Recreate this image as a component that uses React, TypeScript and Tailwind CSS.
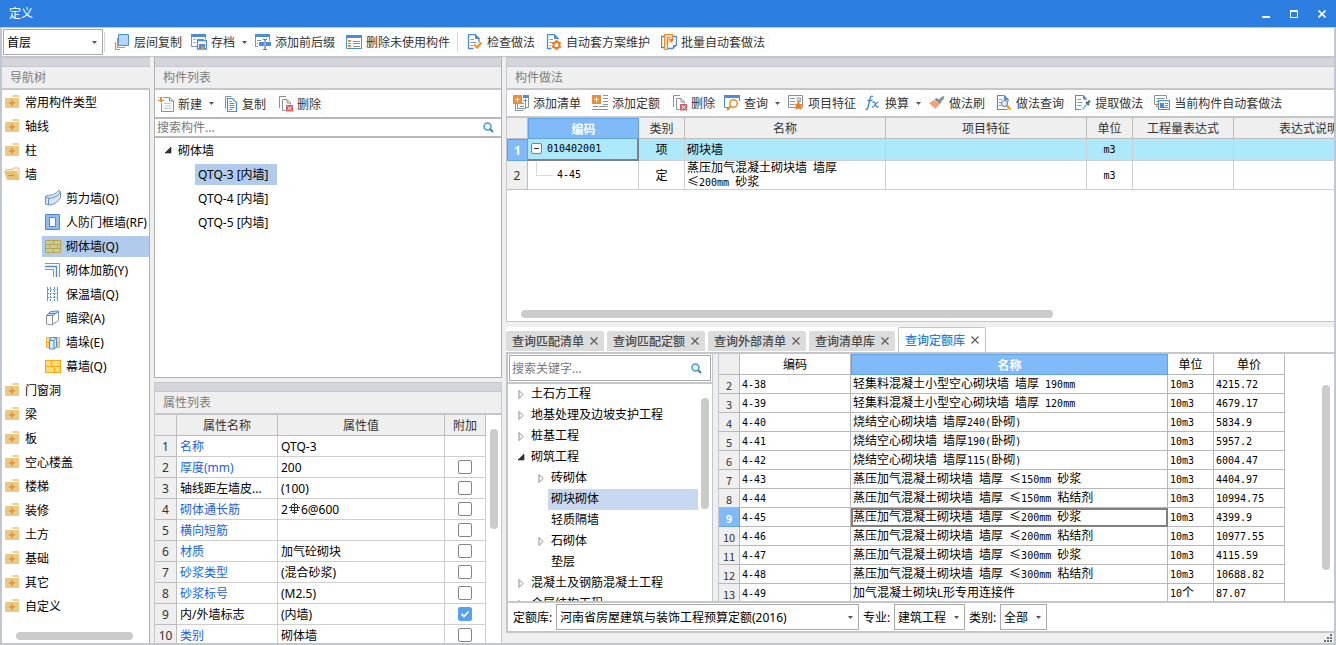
import React from 'react';
import clsx from 'clsx';

const BLUE = '#4a8ddb';
const ORANGE = '#f08a2c';
const GRAY = '#87939b';

/* ---------- 图标 ---------- */

const icons = {
    layerCopy: (
        <>
            <path d="M4.500 .5h10v11h-10z" fill="#b5d5fa" stroke={BLUE} />
            <path d="M3.500 4v9.500H11M1.500 8v7.500H6" fill="none" stroke={ORANGE} strokeWidth="1.2" />
        </>
    ),
    archive: (
        <>
            <path d="M0 0h15v3H0z" fill={BLUE} />
            <path d="M.5 3v9.500H6M2.500 5.500h2M2.500 8.500h2M6 5.500h7M14.500 3v2" fill="none" stroke={GRAY} />
            <path d="M6.500 6.500h9v8.500h-9z" fill="#fff" stroke={BLUE} strokeWidth="1.3" />
            <path d="M8 10h6v5H8z" fill={BLUE} />
            <path d="M10 12h3v3h-3z" fill={ORANGE} />
        </>
    ),
    prefix: (
        <>
            <path d="M0 0h15v3H0z" fill={BLUE} />
            <path d="M.5 3v10M14.500 3v4M.5 12.500H3M2 6.500h4M2 9.500h1" fill="none" stroke={GRAY} />
            <path d="M4 8h5v4H4zM11 8h5v4h-5z" fill={BLUE} />
            <path d="M8 5.500h4M10 5.500v10M8 15.500h4" stroke="#3d7fca" fill="none" strokeWidth="1.2" />
        </>
    ),
    removeUnused: (
        <>
            <path d="M0 1h16v4H0z" fill={BLUE} />
            <path d="M.5 4v10.500h15V4" fill="#fff" stroke={BLUE} />
            <path d="M2 6h3v2H2zM2 9h3v1H2zM2 11h3v2H2z" fill={ORANGE} />
            <path d="M7 7.500h7M7 9.500h7M7 12.500h7" stroke={GRAY} />
        </>
    ),
    check: (
        <>
            <path d="M8 .5H1.500v14h5M8 .5l4 4v4" fill="none" stroke={BLUE} strokeWidth="1.3" />
            <path d="M8 0v5h5z" fill={BLUE} />
            <path d="M3.500 5.500H7M3.500 8.500h6M3.500 11.500H6" stroke={GRAY} />
            <path d="M7 10.500l3 3 4.500-5" fill="none" stroke={ORANGE} strokeWidth="2" />
        </>
    ),
    autoPlan: (
        <>
            <path d="M8 .5H1.500v14h4M8 .5l4 4v1" fill="none" stroke={BLUE} strokeWidth="1.3" />
            <path d="M8 0v5h5z" fill={BLUE} />
            <path d="M3.500 5.500H7M3.500 8.500h3M3.500 11.500H5" stroke={GRAY} />
            <circle cx="10.500" cy="11" r="3" fill="#fff" stroke="#ee7b22" strokeWidth="2" />
            <path d="M10.500 6v2M10.500 14v2M6.200 8.500l1.500 1M13.300 12.500l1.500 1M6.200 13.500l1.500-1M13.300 9.500l1.500-1" stroke="#ee7b22" strokeWidth="2" />
        </>
    ),
    batch: (
        <>
            <path d="M3.500 2.500h-3v11h3" fill="none" stroke={BLUE} strokeWidth="1.300" />
            <path d="M8 2.500h7.500v8l-4 4H6" fill="#fff" stroke={BLUE} strokeWidth="1.300" />
            <path d="M12 15v-4h4z" fill={BLUE} />
            <path d="M3.500 15.500V.5h8v5M3.500 15.500h3V3.500h3" fill="#fbdcb8" stroke={ORANGE} strokeWidth="1.200" />
            <path d="M7.500 5h6l-3 4z" fill={ORANGE} />
        </>
    ),
    create: (
        <>
            <path d="M6 1.500h5.500l4 3.500v10.500h-12V7" fill="#fff" stroke={GRAY} />
            <path d="M11.500 1.500V5h4" fill="none" stroke={GRAY} />
            <path d="M6 7.500h7M6 10h7M6 12.500h7" stroke="#c3cacf" />
            <path d="M2 1h2v2H2zM5 1h2v1H5zM0 1h1v1H0zM0 5h2V4H0zM4 4h2v1H4zM2 3h2v3H2z" fill={ORANGE} />
        </>
    ),
    copy: (
        <>
            <path d="M3.500 12.500v-12h6" fill="none" stroke={GRAY} />
            <path d="M5.500 2.500h5l4 4v9h-9z" fill="#fff" stroke={BLUE} strokeWidth="1.200" />
            <path d="M7.500 7.500h5M7.500 9.500h5M7.500 11.500h5M7.500 13.500h3M7.500 5.500h2" stroke={BLUE} />
        </>
    ),
    remove: (
        <>
            <path d="M2.500 12V.5H9" fill="none" stroke={GRAY} />
            <path d="M8.500 14.500h-3v-11H10l3.500 3.500v1.500" fill="none" stroke={GRAY} />
            <path d="M10 3.500v3.500h3.500" fill="none" stroke={GRAY} />
            <path d="M9 9h7v6.500H9z" fill="#d95b5b" />
            <path d="M10.500 10.500l4 3.500M14.500 10.500l-4 3.500" stroke="#fff" />
        </>
    ),
    addList: (
        <>
            <path d="M10 0h6v3h-6z" fill={BLUE} />
            <path d="M15.500 3v9.500h-3M4.500 9v4.500h8v-10M2.500 9v6.500h8" fill="none" stroke={GRAY} />
            <path d="M10 5.500h4M7 8.500h4M7 11.500h4" stroke={GRAY} />
            <path d="M0 0h9v9H0z" fill="#ea8d3c" />
            <path d="M4.500 2v5M2 4.500h5" stroke="#fff" />
        </>
    ),
    addQuota: (
        <>
            <path d="M11 .5h5M11 3.500h5M11 6.500h5M11 9.500h5M7 11.500h9M1 11.500h5M0 14.500h16" stroke={GRAY} />
            <path d="M0 0h9v9H0z" fill="#ea8d3c" />
            <path d="M4.500 2v5M2 4.500h5" stroke="#fff" />
        </>
    ),
    query: (
        <>
            <path d="M.5 2v10.500H4M15.500 2v4" fill="none" stroke={BLUE} />
            <path d="M0 0h16v3H0z" fill={BLUE} />
            <circle cx="9.500" cy="8.500" r="3.700" fill="#fff" stroke={ORANGE} strokeWidth="1.500" />
            <path d="M6.500 11.500l-3.500 3.500" stroke={ORANGE} strokeWidth="2.400" />
        </>
    ),
    feature: (
        <>
            <path d="M.5 .5h14v12H.5z" fill="#fff" stroke={GRAY} />
            <path d="M2 3.500h5M2 6.500h5M2 9.500h4M8.500 3h4v2h-4M9 6.500h4" fill="none" stroke={GRAY} />
            <path d="M10.500 6l1.400 3 3.300.4-2.500 2.200.8 3.400-3-1.700-3 1.700.8-3.400L5.800 9.400l3.300-.4z" fill="#ee7b22" />
        </>
    ),
    formula: (
        <>
            <path d="M8 1.500C6.500.6 5.600 1.300 5.200 3L3 12.500c-.4 1.800-1.200 2.300-2.500 1.800M2.500 5.500h5" fill="none" stroke="#3f82d2" strokeWidth="1.300" />
            <path d="M7.500 7.500c2-1.500 2.500 0 3 2s1.300 3.300 3 2M13.500 7.200c-2.500-.2-4 5.300-6.500 5" fill="none" stroke="#3f82d2" strokeWidth="1.200" />
        </>
    ),
    brush: (
        <>
            <path d="M0 8l5-3 6 4-4.500 5z" fill="#fb9e72" />
            <path d="M5.500 4.500l2-1.500 5 4-1.500 2z" fill="#6f8794" />
            <path d="M9 5l3-2.500L14 1l1.500 1-1 2.500-3.500 3z" fill="#87939b" />
        </>
    ),
    methodQuery: (
        <>
            <path d="M8 .5H1.500v14h10M8 .5l4 4v2" fill="none" stroke={BLUE} strokeWidth="1.200" />
            <path d="M8 0v5h5z" fill={BLUE} />
            <path d="M3 4.500h3M3 7.500h2M3 10.500h2" stroke={GRAY} />
            <circle cx="8.500" cy="8.500" r="3" fill="#e4eefc" stroke="#7287b8" strokeWidth="1.200" />
            <path d="M11 11l3.500 3.500" stroke="#f2a12d" strokeWidth="2.600" />
        </>
    ),
    extract: (
        <>
            <path d="M8 .5H.5v14H6M8 .5l3.500 4" fill="none" stroke={BLUE} strokeWidth="1.200" />
            <path d="M8 0v4.500h4z" fill={BLUE} />
            <path d="M2.500 4.500H6M2.500 7.500h5M2.500 10.500h4" stroke={GRAY} />
            <path d="M7.500 14.500l5-6" stroke="#8fd0e0" strokeWidth="2" />
            <path d="M11 7l3 3M12.500 8.500L15 5.500" stroke="#5e6b72" strokeWidth="2" />
        </>
    ),
    currentAuto: (
        <>
            <path d="M4 9.500H.5v-9h12V4M2.500 3.500h8M2.500 6.500H4" fill="none" stroke={GRAY} />
            <path d="M4.500 5.500h11v9h-11z" fill="#fff" stroke={BLUE} strokeWidth="1.200" />
            <path d="M6 8h4v4H6z" fill={BLUE} />
            <path d="M11 8.500h3M11 10.500h3M6 12.500h8" stroke={BLUE} />
            <path d="M2.500 9v3H4" stroke={ORANGE} fill="none" />
        </>
    ),
    folder: (
        <>
            <path d="M8 3l1-2h5l1 1v1z" fill="#efcc8d" />
            <path d="M1 4h14v10H1z" fill="#eec782" />
            <path d="M8 6v6M5 9h6" stroke="#cc9b45" strokeWidth="1.600" />
        </>
    ),
    folderOpen: (
        <>
            <path d="M2 5V3.500h6l1-1.500h6v11" fill="#fbf0d8" stroke="#e3bd77" />
            <path d="M0 5h13l2.500 9H3z" fill="#ecc277" />
            <path d="M4.500 9.500h6" stroke="#c8953c" strokeWidth="1.400" />
        </>
    ),
    shearWall: (
        <>
            <path d="M.5 7l1-1.500c6 0 9.500-2 12-5l2 1v6c-2.500 4.500-7 7.500-12 7.500l-3-1z" fill="#d5e6fb" stroke="#6d8fb5" />
            <path d="M.5 7l3 1.200c5.500 0 9.500-2.200 12-6.200M3.500 8.200V15" fill="none" stroke="#5b8fce" />
        </>
    ),
    doorFrame: (
        <>
            <path d="M.5 .5h14v15H.5z" fill="#8fbcf4" stroke="#4f88cd" />
            <path d="M4.500 3.500h6v9h-6z" fill="#fff" stroke="#4f88cd" />
        </>
    ),
    brick: (
        <>
            <path d="M.5 2.500h15v12H.5z" fill="#c5cba9" stroke="#baa545" />
            <path d="M.5 6.500h15M.5 10.500h15M8.500 2.500v4M4.500 6.500v4M12.500 6.500v4M8.500 10.500v4" fill="none" stroke="#baa545" />
        </>
    ),
    brickBar: (
        <>
            <path d="M0 1.500h14.500V15M0 7.500h8.500V15" fill="none" stroke={GRAY} />
            <path d="M0 4.500h11.500V15" fill="none" stroke={BLUE} strokeWidth="1.400" />
        </>
    ),
    insulation: (
        <>
            <path d="M2.500 1v14M12.500 1v14" stroke="#5b9be2" />
            <path d="M5.500 1v14M9.500 1v14" stroke={BLUE} strokeDasharray="2 1" />
            <path d="M3 3.500h9M3 7.500h9M3 11.500h9" stroke={BLUE} strokeDasharray="1 1.500" />
        </>
    ),
    beam: (
        <>
            <path d="M1.500 5.500h6v9.500l-6-1zM7.500 5.500l6-4v9l-6 4" fill="#fff" stroke={GRAY} />
            <path d="M1.500 5.500l4-4 8-.5-5.500 4.500z" fill="#c3dcf8" stroke={BLUE} />
            <path d="M3.500 3.500h7" stroke={BLUE} />
        </>
    ),
    pier: (
        <>
            <path d="M1.500 3.500h13v10h-13z" fill="#fde08c" stroke="#f5b324" />
            <path d="M1.500 8.500h13M4.500 3.500v5M12.500 8.500v5" stroke="#f5b324" />
            <path d="M4.500 6.500l2-3h5v9l-2 2.500h-5z" fill="#dbeafb" stroke={BLUE} />
            <path d="M4.500 6.500h4.500v8.500M9 6.500l2.500-3" fill="none" stroke={BLUE} />
        </>
    ),
    curtain: (
        <>
            <path d="M.5 2.500h15v12H.5z" fill="#fedb82" stroke="#f5ab12" strokeWidth="1.200" />
            <path d="M.5 8.500h15M6.500 2.500v6M9.500 8.500v6" stroke="#f5ab12" strokeWidth="1.200" />
        </>
    ),
};

type IconName = keyof typeof icons;

const Icon: React.FC<{ name: IconName }> = ({ name }) => (
    <svg viewBox="0 0 16 16" className="h-4 w-4 shrink-0" aria-hidden="true">
        {icons[name]}
    </svg>
);

const Caret = ({ className }: { className?: string }) => (
    <svg viewBox="0 0 5 3" className={clsx('h-[3px] w-[5px] shrink-0', className)} aria-hidden="true">
        <path d="M0 0h5L2.500 3z" fill="#555" />
    </svg>
);

const SearchIcon = () => (
    <svg viewBox="0 0 11 11" className="h-[11px] w-[11px] shrink-0" aria-hidden="true">
        <circle cx="4.500" cy="4.500" r="3.500" fill="#eef6fc" stroke="#4a9fd0" strokeWidth="1.500" />
        <path d="M7 7l3 3" stroke="#2f86bd" strokeWidth="2" />
    </svg>
);

const Expander = ({ open }: { open: boolean }) => (
    <svg viewBox="0 0 8 10" className="h-[10px] w-2 shrink-0" aria-hidden="true">
        {open ? <path d="M7 2v6H1z" fill="#333" stroke="#222" strokeWidth=".6" /> : <path d="M2 1.500l4 4-4 4z" fill="#fff" stroke="#8a8a8a" />}
    </svg>
);

const RebarMark = () => (
    <svg viewBox="0 0 11 11" className="mx-px mb-1 inline-block h-[11px] w-[11px]" role="img" aria-label="HRB400">
        <path d="M5.500 0v11M3 1.500h5M0 4.500h11M1 7.500h9M3 9.500h5M2.500 2v6M8.500 2v6" stroke="#333" fill="none" />
    </svg>
);

/* ---------- 通用组件 ---------- */

interface ToolProps {
    icon: IconName;
    label: string;
    menu?: boolean;
}

const ToolButton: React.FC<ToolProps> = ({ icon, label, menu }) => (
    <button
        type="button"
        className={clsx(
            'flex h-5 shrink-0 items-center whitespace-nowrap text-[#333] hover:bg-[#eef5fd]',
            menu ? 'pl-0.5 pr-px' : 'rounded border border-[#f8f8f8] px-[3px]',
        )}
    >
        <Icon name={icon} />
        <span className="ml-1 pt-0.5">{label}</span>
        {menu && <Caret className="ml-[7px]" />}
    </button>
);

const Separator = () => <div className="mr-0.5 h-5 w-px bg-[#d6d6d6]" />;

const PanelTitle = ({ title }: { title: string }) => (
    <div className="shrink-0 border-b-2 border-[#c3c7cc]">
        <div className="h-[10px] border-y border-[#c3c7cc] bg-[#d4d5db]" />
        <h2 className="flex h-[21px] items-center bg-[#efefef] pl-2 pt-px text-[#7c7c7c]">{title}</h2>
    </div>
);

const ComboBox: React.FC<{ id: string; label: string; value: string; className: string }> = ({ id, label, value, className }) => (
    <div className={clsx('grid items-center', className)}>
        <select
            id={id}
            aria-label={label}
            defaultValue={value}
            className="col-start-1 row-start-1 h-[26px] w-full appearance-none border border-[#a9a9a9] bg-white pl-[3px] pt-0.5 text-black"
        >
            <option>{value}</option>
        </select>
        <Caret className="pointer-events-none col-start-1 row-start-1 mr-1.5 justify-self-end" />
    </div>
);

// 宋体风格单元格：西文半宽、中文全宽
const Mono = ({ children }: { children: string }) => (
    <>
        {children.split(/([\x20-\x7e]+)/).map((part, i) =>
            i % 2 ? (
                <span key={i} className="whitespace-pre-wrap font-['DejaVu_Sans_Mono',monospace] text-[10px]">{part}</span>
            ) : (
                part
            ),
        )}
    </>
);

/* ---------- 数据 ---------- */

const mainTools: ToolProps[] = [
    { icon: 'layerCopy', label: '层间复制' },
    { icon: 'archive', label: '存档', menu: true },
    { icon: 'prefix', label: '添加前后缀' },
    { icon: 'removeUnused', label: '删除未使用构件' },
];

const planTools: ToolProps[] = [
    { icon: 'check', label: '检查做法' },
    { icon: 'autoPlan', label: '自动套方案维护' },
    { icon: 'batch', label: '批量自动套做法' },
];

const componentTools: ToolProps[] = [
    { icon: 'create', label: '新建', menu: true },
    { icon: 'copy', label: '复制' },
    { icon: 'remove', label: '删除' },
];

const methodTools: ToolProps[] = [
    { icon: 'addList', label: '添加清单' },
    { icon: 'addQuota', label: '添加定额' },
    { icon: 'remove', label: '删除' },
    { icon: 'query', label: '查询', menu: true },
    { icon: 'feature', label: '项目特征' },
    { icon: 'formula', label: '换算', menu: true },
    { icon: 'brush', label: '做法刷' },
    { icon: 'methodQuery', label: '做法查询' },
    { icon: 'extract', label: '提取做法' },
    { icon: 'currentAuto', label: '当前构件自动套做法' },
];

const wallTypes: { icon: IconName; label: string; selected?: boolean }[] = [
    { icon: 'shearWall', label: '剪力墙(Q)' },
    { icon: 'doorFrame', label: '人防门框墙(RF)' },
    { icon: 'brick', label: '砌体墙(Q)', selected: true },
    { icon: 'brickBar', label: '砌体加筋(Y)' },
    { icon: 'insulation', label: '保温墙(Q)' },
    { icon: 'beam', label: '暗梁(A)' },
    { icon: 'pier', label: '墙垛(E)' },
    { icon: 'curtain', label: '幕墙(Q)' },
];

const navGroups = ['常用构件类型', '轴线', '柱', '墙', '门窗洞', '梁', '板', '空心楼盖', '楼梯', '装修', '土方', '基础', '其它', '自定义'];

interface Property {
    name: string;
    value: React.ReactNode;
    extra?: boolean;
    plain?: boolean;
}

const properties: Property[] = [
    { name: '名称', value: 'QTQ-3' },
    { name: '厚度(mm)', value: '200', extra: false },
    { name: '轴线距左墙皮...', value: '(100)', extra: false, plain: true },
    { name: '砌体通长筋', value: <>2<RebarMark />6@600</>, extra: false },
    { name: '横向短筋', value: '', extra: false },
    { name: '材质', value: '加气砼砌块', extra: false },
    { name: '砂浆类型', value: '(混合砂浆)', extra: false },
    { name: '砂浆标号', value: '(M2.5)', extra: false },
    { name: '内/外墙标志', value: '(内墙)', extra: true, plain: true },
    { name: '类别', value: '砌体墙', extra: false },
];

const chapters = [
    { label: '土石方工程', depth: 0, open: false },
    { label: '地基处理及边坡支护工程', depth: 0, open: false },
    { label: '桩基工程', depth: 0, open: false },
    { label: '砌筑工程', depth: 0, open: true },
    { label: '砖砌体', depth: 1, open: false },
    { label: '砌块砌体', depth: 1, selected: true },
    { label: '轻质隔墙', depth: 1 },
    { label: '石砌体', depth: 1, open: false },
    { label: '垫层', depth: 1 },
    { label: '混凝土及钢筋混凝土工程', depth: 0, open: false },
    { label: '金属结构工程', depth: 0, open: false },
];

const quotas = [
    ['4-38', '轻集料混凝土小型空心砌块墙 墙厚 190mm', '10m3', '4215.72'],
    ['4-39', '轻集料混凝土小型空心砌块墙 墙厚 120mm', '10m3', '4679.17'],
    ['4-40', '烧结空心砌块墙 墙厚240(卧砌)', '10m3', '5834.9'],
    ['4-41', '烧结空心砌块墙 墙厚190(卧砌)', '10m3', '5957.2'],
    ['4-42', '烧结空心砌块墙 墙厚115(卧砌)', '10m3', '6004.47'],
    ['4-43', '蒸压加气混凝土砌块墙 墙厚 ≤150mm 砂浆', '10m3', '4404.97'],
    ['4-44', '蒸压加气混凝土砌块墙 墙厚 ≤150mm 粘结剂', '10m3', '10994.75'],
    ['4-45', '蒸压加气混凝土砌块墙 墙厚 ≤200mm 砂浆', '10m3', '4399.9'],
    ['4-46', '蒸压加气混凝土砌块墙 墙厚 ≤200mm 粘结剂', '10m3', '10977.55'],
    ['4-47', '蒸压加气混凝土砌块墙 墙厚 ≤300mm 砂浆', '10m3', '4115.59'],
    ['4-48', '蒸压加气混凝土砌块墙 墙厚 ≤300mm 粘结剂', '10m3', '10688.82'],
    ['4-49', '加气混凝土砌块L形专用连接件', '10个', '87.07'],
];

const tabs = ['查询匹配清单', '查询匹配定额', '查询外部清单', '查询清单库', '查询定额库'];

/* ---------- 面板 ---------- */

const TitleBar = () => (
    <header className="flex h-[27px] shrink-0 items-center bg-[#2c7fe1] pl-[9px] text-white">
        <h1 className="flex-1 pt-px">定义</h1>
        <button type="button" aria-label="最小化" className="grid h-full w-7 place-items-center">
            <svg viewBox="0 0 8 8" className="h-2 w-2"><path d="M0 6h8v2H0z" fill="#fff" /></svg>
        </button>
        <button type="button" aria-label="最大化" className="grid h-full w-7 place-items-center">
            <svg viewBox="0 0 8 8" className="h-2 w-2"><path d="M0 0h8v8H0zM1 2v5h6V2z" fill="#fff" fillRule="evenodd" /></svg>
        </button>
        <button type="button" aria-label="关闭" className="grid h-full w-7 place-items-center">
            <svg viewBox="0 0 8 8" className="h-2 w-2"><path d="M.5 .5l7 7M7.500 .5l-7 7" stroke="#fff" strokeWidth="1.600" /></svg>
        </button>
    </header>
);

const NavTree = () => (
    <aside className="flex w-[148px] shrink-0 flex-col">
        <PanelTitle title="导航树" />
        <nav className="flex min-h-0 flex-1 flex-col border-r border-[#b0b0b0] bg-white">
            <ul className="min-h-0 flex-1 overflow-hidden whitespace-nowrap">
                {navGroups.map((group) => (
                    <li key={group}>
                        <div className="flex h-6 items-center gap-[5px] pl-0.5">
                            <Icon name={group === '墙' ? 'folderOpen' : 'folder'} />
                            <span className="pt-0.5">{group}</span>
                        </div>
                        {group === '墙' && (
                            <ul>
                                {wallTypes.map((type) => (
                                    <li key={type.label} className="flex h-6 items-center pl-10">
                                        <div className={clsx('flex h-[21px] flex-1 items-center gap-[5px] pl-[3px]', type.selected && 'bg-[#b1cbec]')}>
                                            <Icon name={type.icon} />
                                            <span className="pt-0.5">{type.label}</span>
                                        </div>
                                    </li>
                                ))}
                            </ul>
                        )}
                    </li>
                ))}
            </ul>
            <div className="h-[11px] px-3.5">
                <div className="h-2 w-[117px] rounded-full bg-[#cbcbcb]" />
            </div>
        </nav>
    </aside>
);

const ComponentList = () => (
    <section className="flex min-h-0 flex-1 flex-col border-x border-b border-[#b0b0b0] bg-white">
        <PanelTitle title="构件列表" />
        <div className="flex h-[27px] shrink-0 items-center gap-[3px] pl-px">
            {componentTools.map((tool) => <ToolButton key={tool.label} {...tool} />)}
        </div>
        <label className="flex h-[21px] shrink-0 items-center border-y-2 border-[#b8b8b8] pl-0.5 pr-[7px]">
            <input type="text" aria-label="搜索构件" placeholder="搜索构件..." className="min-w-0 flex-1 outline-none placeholder:text-[#787878]" />
            <SearchIcon />
        </label>
        <ul className="whitespace-nowrap">
            <li className="flex h-6 items-center gap-1.5 pl-[9px]">
                <Expander open />
                <span className="pt-0.5">砌体墙</span>
            </li>
            {['QTQ-3 [内墙]', 'QTQ-4 [内墙]', 'QTQ-5 [内墙]'].map((name, i) => (
                <li key={name} className="flex h-6 items-center pl-10">
                    <span className={clsx('flex h-[21px] min-w-[82px] items-center px-[3px] pt-px', i === 0 && 'bg-[#b1cbec]')}>{name}</span>
                </li>
            ))}
        </ul>
    </section>
);

const cell = 'border-b border-r border-[#cfcfcf]';
const headCell = 'border-b border-r border-[#bdbdbd] bg-[#efefef] pt-0.5 font-normal text-[#333]';

const PropertyList = () => (
    <section className="flex h-[261px] shrink-0 flex-col overflow-hidden border-x border-[#c3c7cc] bg-white">
        <PanelTitle title="属性列表" />
        <div className="flex min-h-0 flex-1">
            <div className="min-w-0 flex-1 overflow-hidden">
                <table className="w-full table-fixed border-separate border-spacing-0">
                    <thead>
                        <tr className="h-[21px]">
                            <th className={clsx(headCell, 'w-[22px]')} />
                            <th className={clsx(headCell, 'w-[101px]')}>属性名称</th>
                            <th className={headCell}>属性值</th>
                            <th className={clsx(headCell, 'w-[41px]')}>附加</th>
                        </tr>
                    </thead>
                    <tbody>
                        {properties.map((prop, i) => (
                            <tr key={prop.name} className="h-[21px]">
                                <th className={headCell}>{i + 1}</th>
                                <td className={clsx(cell, 'whitespace-nowrap pl-[3px] pt-0.5', !prop.plain && 'text-[#1a5fe8]')}>{prop.name}</td>
                                <td className={clsx(cell, 'whitespace-nowrap pl-[3px] pt-0.5')}>{prop.value}</td>
                                <td className={cell}>
                                    {prop.extra !== undefined && (
                                        <span className="grid place-items-center">
                                            <input
                                                type="checkbox"
                                                aria-label={`附加 ${prop.name}`}
                                                defaultChecked={prop.extra}
                                                className="peer col-start-1 row-start-1 h-3.5 w-3.5 appearance-none rounded-xs border border-[#858585] bg-white checked:border-[#559ff5] checked:bg-[#559ff5]"
                                            />
                                            <svg viewBox="0 0 14 14" className="pointer-events-none invisible col-start-1 row-start-1 h-3.5 w-3.5 peer-checked:visible">
                                                <path d="M3.500 7l2.500 2.500 4.500-5" fill="none" stroke="#fff" strokeWidth="1.800" />
                                            </svg>
                                        </span>
                                    )}
                                </td>
                            </tr>
                        ))}
                    </tbody>
                </table>
            </div>
            <div className="w-[15px] pl-1 pt-3.5">
                <div className="h-[100px] w-2 rounded-full bg-[#cbcbcb]" />
            </div>
        </div>
    </section>
);

const methodCell = clsx(cell, "font-['Noto_Sans_CJK_SC',sans-serif]");

const MethodPanel = () => (
    <section className="flex min-h-0 flex-1 flex-col overflow-hidden border-b border-l border-[#c3c7cc] bg-white">
        <PanelTitle title="构件做法" />
        <div className="flex h-7 shrink-0 items-center gap-[3px] border-b-2 border-[#c3c7cc] pl-0.5">
            {methodTools.map((tool) => <ToolButton key={tool.label} {...tool} />)}
        </div>
        <div className="min-h-0 flex-1 overflow-hidden">
            <table className="w-[878px] table-fixed border-separate border-spacing-0">
                <thead>
                    <tr className="h-[21px]">
                        <th className={clsx(headCell, 'w-[21px]')} />
                        <th className="w-[111px] border border-[#5fa2ea] bg-[#80baf9] pt-0.5 font-bold text-white">编码</th>
                        <th className={clsx(headCell, 'w-[46px]')}>类别</th>
                        <th className={clsx(headCell, 'w-[201px]')}>名称</th>
                        <th className={clsx(headCell, 'w-[201px]')}>项目特征</th>
                        <th className={clsx(headCell, 'w-[46px]')}>单位</th>
                        <th className={clsx(headCell, 'w-[101px]')}>工程量表达式</th>
                        <th className={headCell}>表达式说明</th>
                    </tr>
                </thead>
                <tbody>
                    <tr className="h-[22px] bg-[#aee8fb]">
                        <th className="border border-[#5fa2ea] bg-[#80baf9] pt-0.5 font-bold text-white">1</th>
                        <td className="border-b-2 border-r-2 border-[#808080]">
                            <div className="flex items-center gap-[5px] pl-[3px]">
                                <button type="button" aria-label="折叠" className="grid h-[11px] w-[11px] place-items-center rounded-xs border border-[#808080] bg-white">
                                    <span className="h-px w-[5px] bg-[#333]" />
                                </button>
                                <Mono>010402001</Mono>
                            </div>
                        </td>
                        <td className={clsx(methodCell, 'pb-0.5 text-center')}>项</td>
                        <td className={clsx(methodCell, 'pb-0.5 pl-0.5')}>砌块墙</td>
                        <td className={methodCell} />
                        <td className={clsx(methodCell, 'pb-0.5 text-center')}><Mono>m3</Mono></td>
                        <td className={methodCell} />
                        <td className={methodCell} />
                    </tr>
                    <tr className="h-[29px]">
                        <th className={headCell}>2</th>
                        <td className={methodCell}>
                            <div className="flex items-center gap-1 pl-2">
                                <span className="mb-3 h-3.5 w-[17px] border-b border-l border-[#d8d8d8]" />
                                <Mono>4-45</Mono>
                            </div>
                        </td>
                        <td className={clsx(methodCell, 'text-center')}>定</td>
                        <td className={clsx(methodCell, 'pl-0.5 leading-3')}><Mono>蒸压加气混凝土砌块墙 墙厚 ≤200mm 砂浆</Mono></td>
                        <td className={methodCell} />
                        <td className={clsx(methodCell, 'pb-0.5 text-center')}><Mono>m3</Mono></td>
                        <td className={methodCell} />
                        <td className={methodCell} />
                    </tr>
                </tbody>
            </table>
        </div>
        <div className="h-[11px] shrink-0 pl-3.5">
            <div className="h-2 w-[532px] rounded-full bg-[#cbcbcb]" />
        </div>
    </section>
);

const QueryTabs = () => (
    <div className="flex h-[27px] shrink-0 items-end gap-[3px] border-b-2 border-[#c3c7cc] bg-white" role="tablist">
        {tabs.map((tab, i) => {
            const active = i === tabs.length - 1;
            return (
                <div
                    key={tab}
                    className={clsx(
                        'flex items-center gap-1.5 px-1.5 font-medium',
                        active ? 'h-[25px] rounded-t-xs border border-b-0 border-[#c3c7cc] bg-white text-[#2b7de0]' : 'mb-px h-5 rounded-t-xs bg-[#dcdcdc] text-[#4a4a4a]',
                    )}
                >
                    <button type="button" role="tab" aria-selected={active} className="whitespace-nowrap pt-0.5">{tab}</button>
                    <button type="button" aria-label={`关闭${tab}`}>
                        <svg viewBox="0 0 8 8" className="h-2 w-2"><path d="M.5 .5l7 7M7.500 .5l-7 7" stroke="#5c5c5c" strokeWidth="1.200" /></svg>
                    </button>
                </div>
            );
        })}
    </div>
);

const ChapterTree = () => (
    <div className="flex w-[205px] shrink-0 flex-col border-r border-[#c3c7cc] bg-white">
        <div className="shrink-0 border-b-2 border-[#c3c7cc] p-px">
            <label className="flex h-[26px] items-center border border-[#a9a9a9] pl-0.5 pr-2">
                <input type="text" aria-label="搜索关键字" placeholder="搜索关键字..." className="min-w-0 flex-1 pt-0.5 outline-none placeholder:text-[#787878]" />
                <SearchIcon />
            </label>
        </div>
        <div className="flex min-h-0 flex-1">
            <ul className="min-w-0 flex-1 overflow-hidden whitespace-nowrap">
                {chapters.map((item) => (
                    <li key={item.label} className={clsx('flex h-[21px] items-center', item.depth ? 'pl-[29px]' : 'pl-[9px]')}>
                        <span className="w-[11px] pb-0.5">{item.open !== undefined && <Expander open={item.open} />}</span>
                        <span className={clsx('flex h-full flex-1 items-center pb-0.5 pl-[3px]', item.selected && 'bg-[#c8d8f0]')}>{item.label}</span>
                    </li>
                ))}
            </ul>
            <div className="w-3.5 pl-[3px] pt-3.5">
                <div className="h-[111px] w-2 rounded-full bg-[#cbcbcb]" />
            </div>
        </div>
    </div>
);

const quotaHead = 'border-b border-r border-[#b8b8b8] bg-white font-normal text-black';
const quotaCell = 'whitespace-nowrap border-b border-r border-[#b8b8b8] pb-0.5 pl-0.5';

const QuotaTable = () => (
    <div className="flex min-w-0 flex-1 border-l border-[#c3c7cc] bg-white">
        <div className="min-w-0 flex-1 overflow-hidden">
            <table className="w-[566px] table-fixed border-separate border-spacing-0 font-['Noto_Sans_CJK_SC',sans-serif]">
                <thead>
                    <tr className="h-[21px]">
                        <th className="w-[21px] border-b border-r border-[#b8b8b8] bg-[#efefef]" />
                        <th className={clsx(quotaHead, 'w-[111px]')}>编码</th>
                        <th className="border border-[#5fa2ea] bg-[#80baf9] font-bold text-white">名称</th>
                        <th className={clsx(quotaHead, 'w-[46px]')}>单位</th>
                        <th className={clsx(quotaHead, 'w-[71px]')}>单价</th>
                    </tr>
                </thead>
                <tbody className="leading-[13px]">
                    {quotas.map(([code, name, unit, price], i) => {
                        const selected = code === '4-45';
                        return (
                            <tr key={code} className="h-[19px]">
                                <th
                                    className={clsx(
                                        'border-b border-r pt-0.5 text-[11px] leading-[13px]',
                                        selected ? 'border-[#5fa2ea] bg-[#80baf9] font-bold text-white' : 'border-[#b8b8b8] bg-[#efefef] font-normal text-[#333]',
                                    )}
                                >
                                    {i + 2}
                                </th>
                                <td className={quotaCell}><Mono>{code}</Mono></td>
                                <td className={clsx(quotaCell, selected && 'outline-2 -outline-offset-2 outline-[#808080]')}><Mono>{name}</Mono></td>
                                <td className={quotaCell}><Mono>{unit}</Mono></td>
                                <td className={quotaCell}><Mono>{price}</Mono></td>
                            </tr>
                        );
                    })}
                </tbody>
            </table>
        </div>
        <div className="w-3 pt-[31px]">
            <div className="h-[185px] w-2 rounded-full bg-[#cbcbcb]" />
        </div>
    </div>
);

const QueryPanel = () => (
    <section className="flex h-[306px] shrink-0 flex-col">
        <QueryTabs />
        <div className="flex min-h-0 flex-1 gap-[5px] border-l-2 border-[#c3c7cc]">
            <ChapterTree />
            <QuotaTable />
        </div>
        <div className="flex h-8 shrink-0 items-center gap-1 border-y-2 border-l-2 border-[#c3c7cc] bg-white pl-[5px]">
            <label htmlFor="library" className="w-[39px] whitespace-nowrap pt-0.5">定额库:</label>
            <ComboBox id="library" label="定额库" value="河南省房屋建筑与装饰工程预算定额(2016)" className="w-[303px]" />
            <label htmlFor="major" className="w-[27px] whitespace-nowrap pt-0.5">专业:</label>
            <ComboBox id="major" label="专业" value="建筑工程" className="w-[71px]" />
            <label htmlFor="category" className="w-[27px] whitespace-nowrap pt-0.5">类别:</label>
            <ComboBox id="category" label="类别" value="全部" className="w-[47px]" />
        </div>
    </section>
);

const App: React.FC = () => (
    <div className="flex h-screen flex-col overflow-hidden bg-[#efefef] font-['Noto_Sans','Noto_Sans_CJK_SC',sans-serif] text-xs text-black">
        <TitleBar />
        <div className="flex min-h-0 flex-1 flex-col border-x-2 border-b-2 border-[#c0c6d2]">
            <div className="flex h-[30px] shrink-0 items-center gap-px border-y border-[#c3c7cc] bg-white pl-px">
                <ComboBox id="floor" label="楼层" value="首层" className="w-[100px]" />
                <div className="flex items-center gap-[3px]">
                    <Separator />
                    {mainTools.map((tool) => <ToolButton key={tool.label} {...tool} />)}
                    <Separator />
                    {planTools.map((tool) => <ToolButton key={tool.label} {...tool} />)}
                </div>
            </div>
            <main className="flex min-h-0 flex-1 gap-1">
                <NavTree />
                <div className="flex w-[348px] shrink-0 flex-col gap-1">
                    <ComponentList />
                    <PropertyList />
                </div>
                <div className="flex min-w-0 flex-1 flex-col">
                    <MethodPanel />
                    <div className="h-[5px] shrink-0" />
                    <QueryPanel />
                    <footer className="flex h-[10px] shrink-0 items-center justify-end pr-0.5">
                        <svg viewBox="0 0 8 8" className="h-2 w-2" aria-hidden="true">
                            <path d="M6 0h2v2H6zM3 3h2v2H3zM6 3h2v2H6zM0 6h2v2H0zM3 6h2v2H3zM6 6h2v2H6z" fill="#6a6f75" />
                        </svg>
                    </footer>
                </div>
            </main>
        </div>
    </div>
);

export default App;
